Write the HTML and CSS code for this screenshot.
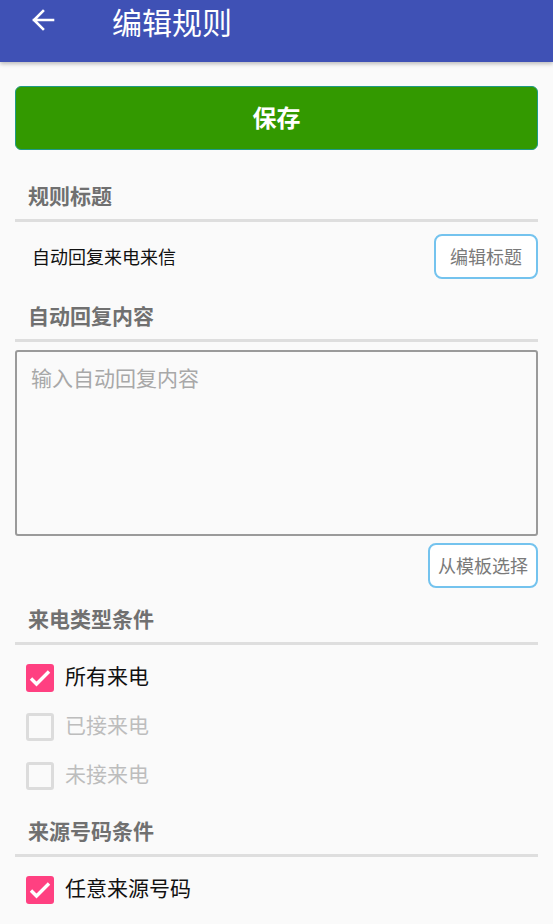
FILE: index.html
```html
<!DOCTYPE html>
<html>
<head>
<meta charset="utf-8"/>
<link rel="stylesheet" href="styles.css">
<title>编辑规则</title>
</head>
<body>

<div class="toolbar">
  <svg class="back" viewBox="0 0 24 24" width="24" height="24">
    <path d="M22 12H3M12 3l-9 9 9 9" fill="none" stroke="#fff" stroke-width="2.6" stroke-linecap="square"/>
  </svg>
  <span class="title">编辑规则</span>
</div>

<div class="content">
  <button class="save">保存</button>

  <div class="section first">规则标题</div>
  <div class="divider"></div>
  <div class="titlerow">
    <span class="rulename">自动回复来电来信</span>
    <button class="outline">编辑标题</button>
  </div>

  <div class="section">自动回复内容</div>
  <div class="divider"></div>
  <textarea class="reply" placeholder="输入自动回复内容"></textarea>
  <div class="rightbtn"><button class="outline wide">从模板选择</button></div>

  <div class="section gap">来电类型条件</div>
  <div class="divider"></div>
  <div class="checklist">
    <div class="check on"><span class="box"><svg viewBox="0 0 28 28"><path d="M5 14.5l5.5 5.5L23 7.5" fill="none" stroke="#fff" stroke-width="3.4"/></svg></span><span class="label">所有来电</span></div>
    <div class="check off"><span class="box"></span><span class="label">已接来电</span></div>
    <div class="check off"><span class="box"></span><span class="label">未接来电</span></div>
  </div>

  <div class="section gap">来源号码条件</div>
  <div class="divider"></div>
  <div class="checklist">
    <div class="check on"><span class="box"><svg viewBox="0 0 28 28"><path d="M5 14.5l5.5 5.5L23 7.5" fill="none" stroke="#fff" stroke-width="3.4"/></svg></span><span class="label">任意来源号码</span></div>
  </div>
</div>

</body>
</html>
```

FILE: styles.css
```css
body {
  margin: 0;
  background-color: #fafafa;
  font-family: "Noto Sans CJK SC", "Noto Sans", sans-serif;
}

.toolbar {
  height: 62px;
  background-color: #3f51b5;
  box-shadow: 0 2px 4px rgba(0,0,0,0.25);
  display: flex;
  align-items: flex-start;
}
.toolbar .back {margin: 8px 0 0 31px; width: 24px; height: 24px;}
.toolbar .title {color: #fff; font-size: 30px; line-height: 40px; margin: 1px 0 0 57px;}

.content {padding: 0 15px;}

.save {
  display: block;
  width: 100%;
  height: 64px;
  margin-top: 24px;
  padding-bottom: 5px;
  background-color: #339900;
  border: 1px solid #1f9a86;
  border-radius: 6px;
  color: #fff;
  font-family: inherit;
  font-size: 24px;
  font-weight: bold;
}

.section {
  color: #707070;
  font-size: 21px;
  font-weight: bold;
  line-height: 28px;
  padding-left: 13px;
  margin-top: 22px;
}
.section.first {margin-top: 31px;}
.section.gap {margin-top: 16px;}

.divider {height: 3px; background-color: #dedede; margin-top: 10px;}

.titlerow {
  display: flex;
  justify-content: space-between;
  align-items: center;
  margin-top: 12px;
}
.rulename {font-size: 18px; color: #111; padding-left: 17px; padding-bottom: 2px;}

.outline {
  height: 45px;
  padding: 0 14px 2px;
  background-color: #fff;
  border: 2px solid #74c3ee;
  border-radius: 8px;
  color: #7a7a7a;
  font-family: inherit;
  font-size: 18px;
}
.outline.wide {padding: 0 8px 2px;}

.reply {
  display: block;
  box-sizing: border-box;
  width: 100%;
  height: 186px;
  margin-top: 8px;
  padding: 10px 14px;
  background-color: #fafafa;
  border: 2px solid #9a9a9a;
  border-radius: 3px;
  font-family: inherit;
  font-size: 21px;
  line-height: 30px;
  resize: none;
}
.reply::placeholder {color: #a8a8a8;}

.rightbtn {display: flex; justify-content: flex-end; margin-top: 7px;}

.checklist {margin-top: 8px;}
.check {
  display: flex;
  align-items: center;
  height: 49px;
  padding-left: 11px;
  font-size: 21px;
  color: #111;
}
.check .label {padding-bottom: 5px;}
.check .box {
  box-sizing: border-box;
  width: 28px;
  height: 28px;
  border-radius: 3px;
  margin-right: 11px;
  display: flex;
  align-items: center;
  justify-content: center;
}
.check .box svg {width: 28px; height: 28px;}
.check.on .box {background-color: #ff4081;}
.check.off {color: #bdbdbd;}
.check.off .box {border: 3px solid #dcdcdc;}
```
